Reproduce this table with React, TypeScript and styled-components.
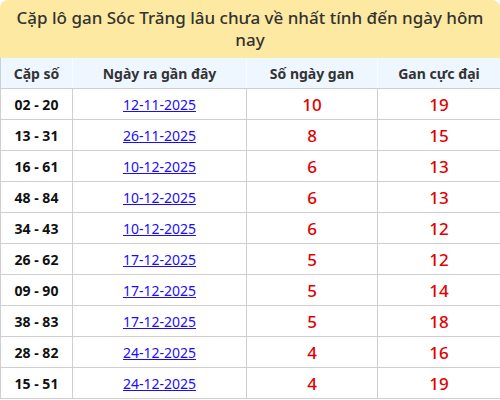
import React from "react";
import styled, { createGlobalStyle } from "styled-components";

const GlobalStyle = createGlobalStyle`
  html, body {
    margin: 0;
    padding: 0;
    background: #fff;
  }
  body {
    font-family: "Noto Sans", "Liberation Sans", sans-serif;
  }
`;

const Wrapper = styled.div`
  width: 500px;
  box-sizing: border-box;
`;

const Title = styled.h2`
  margin: 0;
  background: #fde9a1;
  border-radius: 8px 8px 0 0;
  padding: 7px 14px 7px;
  font-size: 17px;
  line-height: 22px;
  font-weight: 500;
  color: #333;
  text-align: center;
`;

const Table = styled.table`
  width: 500px;
  border-collapse: collapse;
  table-layout: fixed;
`;

const Col = styled.col<{ $w: number }>`
  width: ${({ $w }) => $w}px;
`;

const HeadCell = styled.th`
  height: 30px;
  padding: 0;
  background: #eef6ff;
  border: 1px solid #cfcfcf;
  border-top: none;
  border-left-color: #f8fbff;
  border-right-color: #f8fbff;
  font-size: 14px;
  font-weight: 700;
  color: #333;
  text-align: center;

  &:first-child {
    border-left-color: #cfcfcf;
  }
  &:last-child {
    border-right-color: #cfcfcf;
  }
`;

const Cell = styled.td`
  height: 30px;
  padding: 0;
  border: 1px solid #cfcfcf;
  text-align: center;
`;

const PairCell = styled(Cell)`
  font-size: 14px;
  font-weight: 700;
  color: #111;
`;

const DateLink = styled.a`
  font-size: 14px;
  color: #1a0dff;
  text-decoration: underline;
`;

const NumCell = styled(Cell)`
  font-size: 17px;
  font-weight: 500;
  color: #e30000;
`;

const rows = [
  ["02 - 20", "12-11-2025", 10, 19],
  ["13 - 31", "26-11-2025", 8, 15],
  ["16 - 61", "10-12-2025", 6, 13],
  ["48 - 84", "10-12-2025", 6, 13],
  ["34 - 43", "10-12-2025", 6, 12],
  ["26 - 62", "17-12-2025", 5, 12],
  ["09 - 90", "17-12-2025", 5, 14],
  ["38 - 83", "17-12-2025", 5, 18],
  ["28 - 82", "24-12-2025", 4, 16],
  ["15 - 51", "24-12-2025", 4, 19],
] as const;

export default function App() {
  return (
    <>
      <GlobalStyle />
      <Wrapper>
        <Title>Cặp lô gan Sóc Trăng lâu chưa về nhất tính đến ngày hôm nay</Title>
        <Table>
          <colgroup>
            <Col $w={72} />
            <Col $w={174} />
            <Col $w={131} />
            <Col $w={123} />
          </colgroup>
          <thead>
            <tr>
              <HeadCell>Cặp số</HeadCell>
              <HeadCell>Ngày ra gần đây</HeadCell>
              <HeadCell>Số ngày gan</HeadCell>
              <HeadCell>Gan cực đại</HeadCell>
            </tr>
          </thead>
          <tbody>
            {rows.map(([pair, date, days, max]) => (
              <tr key={pair}>
                <PairCell>{pair}</PairCell>
                <Cell>
                  <DateLink href="#">{date}</DateLink>
                </Cell>
                <NumCell>{days}</NumCell>
                <NumCell>{max}</NumCell>
              </tr>
            ))}
          </tbody>
        </Table>
      </Wrapper>
    </>
  );
}
